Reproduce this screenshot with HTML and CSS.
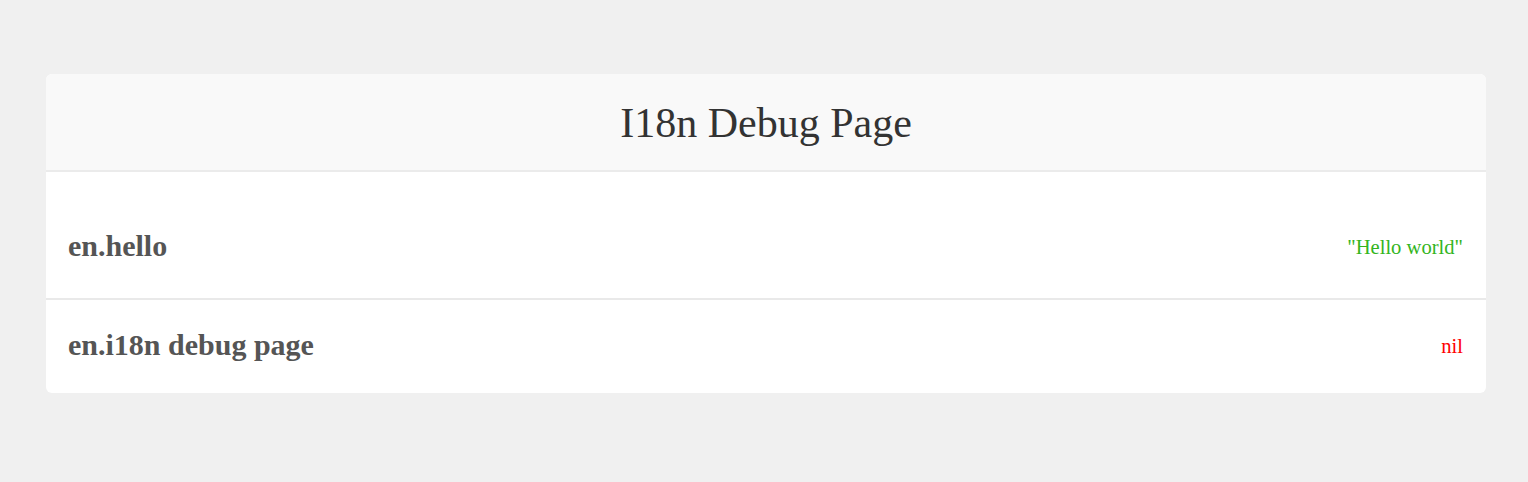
FILE: index.html
```html
<!DOCTYPE html>
<html>
<head>
<meta charset="utf-8">
<link rel="stylesheet" href="styles.css">
</head>
<body>
<div class="card">
  <div class="card-header"><h1 class="title">I18n Debug Page</h1></div>
  <ul class="list">
    <li class="row first"><span class="key">en.hello</span><span class="val ok">"Hello world"</span></li>
    <li class="row"><span class="key">en.i18n debug page</span><span class="val nil">nil</span></li>
  </ul>
</div>
</body>
</html>
```
FILE: styles.css
```css
html, body { margin: 0; padding: 0; }
body {
  background: #f0f0f0;
  font-family: "Liberation Serif", "Times New Roman", serif;
  height: 482px;
  overflow: hidden;
}
.card {
  margin: 74px 42px 0 46px;
  background: #fff;
  border-radius: 6px;
  overflow: hidden;
}
.card-header {
  background: #f9f9f9;
  border-bottom: 2px solid #ebebeb;
  height: 96px;
  display: flex;
  align-items: center;
  justify-content: center;
}
.title {
  margin: 0;
  font-weight: normal;
  font-size: 42px;
  color: #333;
  line-height: 1;
  padding-top: 2px;
}
.list {
  list-style: none;
  margin: 0;
  padding: 0;
}
.row {
  box-sizing: border-box;
  height: 93px;
  display: flex;
  align-items: center;
  justify-content: space-between;
  padding: 0 23px 4px 22px;
}
.row.first { height: 126px; padding-top: 25px; }
.row + .row { border-top: 2px solid #e9e9e9; height: 95px; }
.key {
  font-weight: bold;
  font-size: 30px;
  color: #555;
}
.val { font-size: 20.6px; padding-top: 4px; }
.ok { color: #33b51d; }
.nil { color: #f00; }
```
